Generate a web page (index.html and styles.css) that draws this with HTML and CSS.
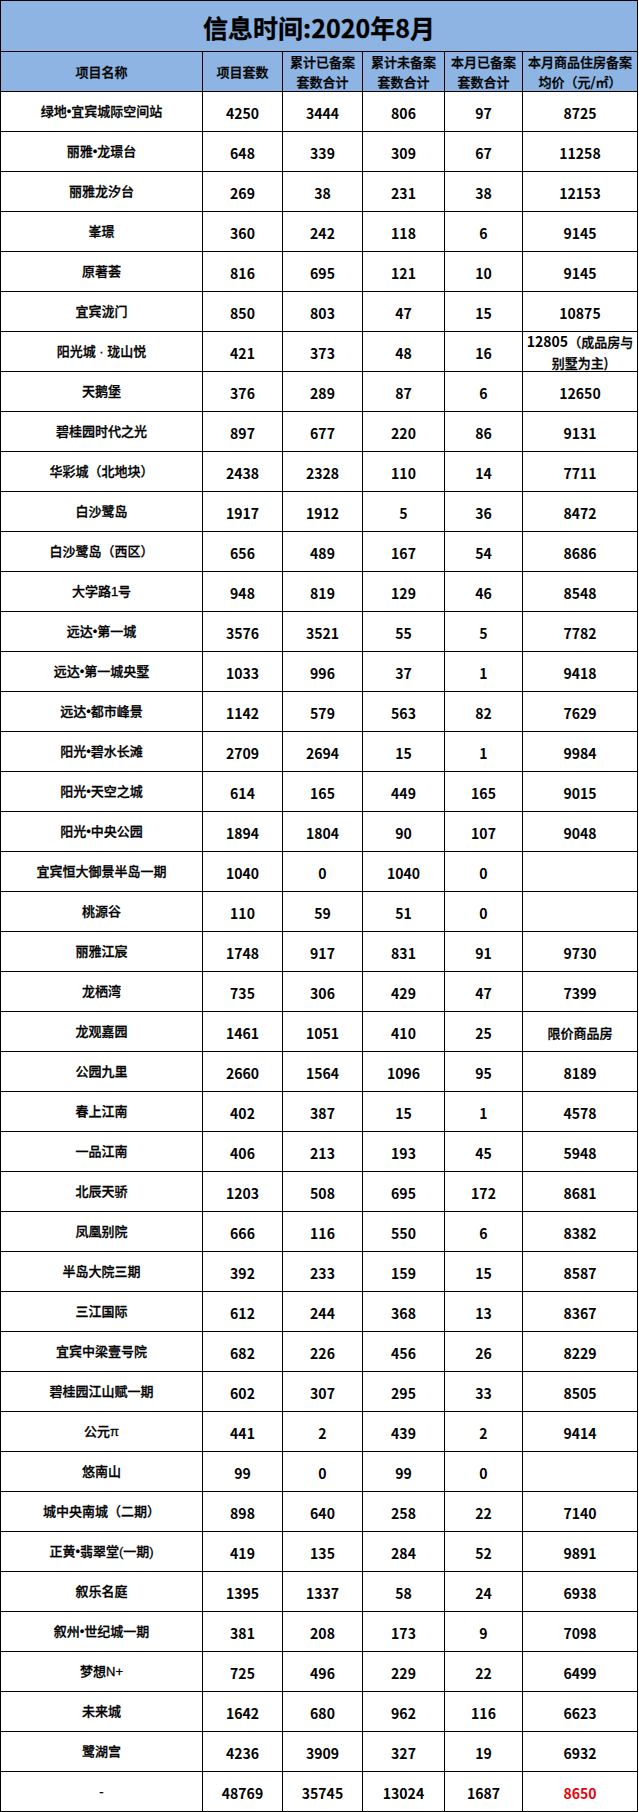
FILE: index.html
```html
<!DOCTYPE html>
<html lang="zh-CN">
<head>
<meta charset="utf-8">
<title>信息时间:2020年8月</title>
<link rel="stylesheet" href="styles.css">
</head>
<body>
<div class="sheet">
  <div class="title">信息时间:2020年8月</div>

  <div class="h">项目名称</div>
  <div class="h">项目套数</div>
  <div class="h">累计已备案<br>套数合计</div>
  <div class="h">累计未备案<br>套数合计</div>
  <div class="h">本月已备案<br>套数合计</div>
  <div class="h">本月商品住房备案<br>均价（元/㎡）</div>

  <div class="name">绿地•宜宾城际空间站</div><div class="num">4250</div><div class="num">3444</div><div class="num">806</div><div class="num">97</div><div class="num">8725</div>
  <div class="name">丽雅•龙璟台</div><div class="num">648</div><div class="num">339</div><div class="num">309</div><div class="num">67</div><div class="num">11258</div>
  <div class="name">丽雅龙汐台</div><div class="num">269</div><div class="num">38</div><div class="num">231</div><div class="num">38</div><div class="num">12153</div>
  <div class="name">峯璟</div><div class="num">360</div><div class="num">242</div><div class="num">118</div><div class="num">6</div><div class="num">9145</div>
  <div class="name">原著荟</div><div class="num">816</div><div class="num">695</div><div class="num">121</div><div class="num">10</div><div class="num">9145</div>
  <div class="name">宜宾泷门</div><div class="num">850</div><div class="num">803</div><div class="num">47</div><div class="num">15</div><div class="num">10875</div>
  <div class="name">阳光城 · 珑山悦</div><div class="num">421</div><div class="num">373</div><div class="num">48</div><div class="num">16</div><div class="num two"><span>12805<span class="cn">（成品房与</span><br><span class="cn">别墅为主)</span></span></div>
  <div class="name">天鹅堡</div><div class="num">376</div><div class="num">289</div><div class="num">87</div><div class="num">6</div><div class="num">12650</div>
  <div class="name">碧桂园时代之光</div><div class="num">897</div><div class="num">677</div><div class="num">220</div><div class="num">86</div><div class="num">9131</div>
  <div class="name">华彩城（北地块）</div><div class="num">2438</div><div class="num">2328</div><div class="num">110</div><div class="num">14</div><div class="num">7711</div>
  <div class="name">白沙鹭岛</div><div class="num">1917</div><div class="num">1912</div><div class="num">5</div><div class="num">36</div><div class="num">8472</div>
  <div class="name">白沙鹭岛（西区）</div><div class="num">656</div><div class="num">489</div><div class="num">167</div><div class="num">54</div><div class="num">8686</div>
  <div class="name">大学路1号</div><div class="num">948</div><div class="num">819</div><div class="num">129</div><div class="num">46</div><div class="num">8548</div>
  <div class="name">远达•第一城</div><div class="num">3576</div><div class="num">3521</div><div class="num">55</div><div class="num">5</div><div class="num">7782</div>
  <div class="name">远达•第一城央墅</div><div class="num">1033</div><div class="num">996</div><div class="num">37</div><div class="num">1</div><div class="num">9418</div>
  <div class="name">远达•都市峰景</div><div class="num">1142</div><div class="num">579</div><div class="num">563</div><div class="num">82</div><div class="num">7629</div>
  <div class="name">阳光•碧水长滩</div><div class="num">2709</div><div class="num">2694</div><div class="num">15</div><div class="num">1</div><div class="num">9984</div>
  <div class="name">阳光•天空之城</div><div class="num">614</div><div class="num">165</div><div class="num">449</div><div class="num">165</div><div class="num">9015</div>
  <div class="name">阳光•中央公园</div><div class="num">1894</div><div class="num">1804</div><div class="num">90</div><div class="num">107</div><div class="num">9048</div>
  <div class="name">宜宾恒大御景半岛一期</div><div class="num">1040</div><div class="num">0</div><div class="num">1040</div><div class="num">0</div><div class="num"></div>
  <div class="name">桃源谷</div><div class="num">110</div><div class="num">59</div><div class="num">51</div><div class="num">0</div><div class="num"></div>
  <div class="name">丽雅江宸</div><div class="num">1748</div><div class="num">917</div><div class="num">831</div><div class="num">91</div><div class="num">9730</div>
  <div class="name">龙栖湾</div><div class="num">735</div><div class="num">306</div><div class="num">429</div><div class="num">47</div><div class="num">7399</div>
  <div class="name">龙观嘉园</div><div class="num">1461</div><div class="num">1051</div><div class="num">410</div><div class="num">25</div><div class="num"><span class="cn">限价商品房</span></div>
  <div class="name">公园九里</div><div class="num">2660</div><div class="num">1564</div><div class="num">1096</div><div class="num">95</div><div class="num">8189</div>
  <div class="name">春上江南</div><div class="num">402</div><div class="num">387</div><div class="num">15</div><div class="num">1</div><div class="num">4578</div>
  <div class="name">一品江南</div><div class="num">406</div><div class="num">213</div><div class="num">193</div><div class="num">45</div><div class="num">5948</div>
  <div class="name">北辰天骄</div><div class="num">1203</div><div class="num">508</div><div class="num">695</div><div class="num">172</div><div class="num">8681</div>
  <div class="name">凤凰别院</div><div class="num">666</div><div class="num">116</div><div class="num">550</div><div class="num">6</div><div class="num">8382</div>
  <div class="name">半岛大院三期</div><div class="num">392</div><div class="num">233</div><div class="num">159</div><div class="num">15</div><div class="num">8587</div>
  <div class="name">三江国际</div><div class="num">612</div><div class="num">244</div><div class="num">368</div><div class="num">13</div><div class="num">8367</div>
  <div class="name">宜宾中梁壹号院</div><div class="num">682</div><div class="num">226</div><div class="num">456</div><div class="num">26</div><div class="num">8229</div>
  <div class="name">碧桂园江山赋一期</div><div class="num">602</div><div class="num">307</div><div class="num">295</div><div class="num">33</div><div class="num">8505</div>
  <div class="name">公元π</div><div class="num">441</div><div class="num">2</div><div class="num">439</div><div class="num">2</div><div class="num">9414</div>
  <div class="name">悠南山</div><div class="num">99</div><div class="num">0</div><div class="num">99</div><div class="num">0</div><div class="num"></div>
  <div class="name">城中央南城（二期）</div><div class="num">898</div><div class="num">640</div><div class="num">258</div><div class="num">22</div><div class="num">7140</div>
  <div class="name">正黄•翡翠堂(一期)</div><div class="num">419</div><div class="num">135</div><div class="num">284</div><div class="num">52</div><div class="num">9891</div>
  <div class="name">叙乐名庭</div><div class="num">1395</div><div class="num">1337</div><div class="num">58</div><div class="num">24</div><div class="num">6938</div>
  <div class="name">叙州•世纪城一期</div><div class="num">381</div><div class="num">208</div><div class="num">173</div><div class="num">9</div><div class="num">7098</div>
  <div class="name">梦想N+</div><div class="num">725</div><div class="num">496</div><div class="num">229</div><div class="num">22</div><div class="num">6499</div>
  <div class="name">未来城</div><div class="num">1642</div><div class="num">680</div><div class="num">962</div><div class="num">116</div><div class="num">6623</div>
  <div class="name">鹭湖宫</div><div class="num">4236</div><div class="num">3909</div><div class="num">327</div><div class="num">19</div><div class="num">6932</div>
  <div class="name">-</div><div class="num">48769</div><div class="num">35745</div><div class="num">13024</div><div class="num">1687</div><div class="num red">8650</div>
</div>
</body>
</html>
```

FILE: styles.css
```css
html, body {
  margin: 0;
  padding: 0;
  background: #ffffff;
}

.sheet {
  display: grid;
  grid-template-columns: 202px 80px 80px 82px 78px 115px;
  grid-template-rows: 51px 40px;
  grid-auto-rows: 40px;
  width: 638px;
  box-sizing: border-box;
  border-top: 1px solid #000;
  border-left: 1px solid #000;
  font-family: "Liberation Sans", "Noto Sans CJK SC", sans-serif;
  color: #000;
}

.sheet > div {
  box-sizing: border-box;
  border-right: 1px solid #000;
  border-bottom: 1px solid #000;
  display: flex;
  align-items: center;
  justify-content: center;
  text-align: center;
  overflow: hidden;
}

.title {
  grid-column: 1 / -1;
  background: #8db4e2;
  font-family: "Noto Sans CJK SC", sans-serif;
  font-weight: 700;
  font-size: 25px;
  line-height: 30px;
  padding-top: 1px;
  -webkit-text-stroke: 0.3px #000;
}

.h {
  background: #8db4e2;
  font-family: "Noto Sans CJK SC", sans-serif;
  font-size: 13px;
  line-height: 20px;
  font-weight: 500;
  -webkit-text-stroke: 0.3px #000;
}

.name {
  font-size: 13px;
  line-height: 20px;
  font-weight: 500;
  padding-top: 1px;
  -webkit-text-stroke: 0.3px #000;
}

.num {
  font-family: "Noto Sans CJK SC", sans-serif;
  font-weight: 700;
  font-size: 14px;
  line-height: 20px;
  padding-top: 2px;
}

.num .cn {
  font-weight: 500;
  font-size: 13px;
  -webkit-text-stroke: 0.3px #000;
}

.num.two {
  padding-top: 0;
}

.red {
  color: #e8000b;
}
```
